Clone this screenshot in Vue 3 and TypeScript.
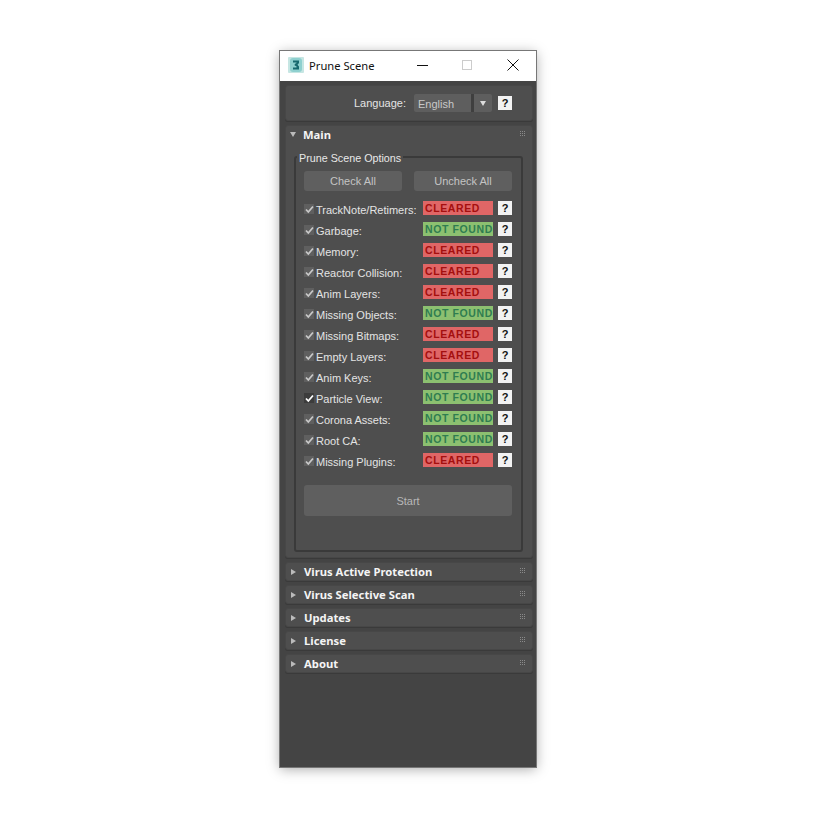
<script setup lang="ts">
interface Row { name: string; found: boolean; dark?: boolean }
const rows: Row[] = [
  { name: 'TrackNote/Retimers:', found: false },
  { name: 'Garbage:', found: true },
  { name: 'Memory:', found: false },
  { name: 'Reactor Collision:', found: false },
  { name: 'Anim Layers:', found: false },
  { name: 'Missing Objects:', found: true },
  { name: 'Missing Bitmaps:', found: false },
  { name: 'Empty Layers:', found: false },
  { name: 'Anim Keys:', found: true },
  { name: 'Particle View:', found: true, dark: true },
  { name: 'Corona Assets:', found: true },
  { name: 'Root CA:', found: true },
  { name: 'Missing Plugins:', found: false },
]
const closed = ['Virus Active Protection', 'Virus Selective Scan', 'Updates', 'License', 'About']
</script>

<template>
  <div class="page">
    <div class="window">
      <header class="titlebar">
        <svg class="appicon" width="16" height="16" viewBox="0 0 16 16">
          <rect width="16" height="16" rx="1" fill="#c6e6e3" />
          <rect x="2" y="1" width="12" height="14" rx="3" fill="#8fd0cf" />
          <path d="M5 3.500h6v2.500l-1.500 1.800 1.500 1.700v3h-6v-2h3.500v-1.200l-1.800-.8v-1.500l1.800-.9v-.6h-3.500z" fill="#17696f" />
        </svg>
        <span class="title">Prune Scene</span>
        <div class="controls">
          <svg width="12" height="12" viewBox="0 0 12 12"><path d="M1 6.500h11" stroke="#111" /></svg>
          <svg width="12" height="12" viewBox="0 0 12 12"><rect x="1.500" y="1.500" width="9" height="9" fill="none" stroke="#ccc" /></svg>
          <svg class="close" width="12" height="12" viewBox="0 0 12 12"><path d="M.5 .5l11 11M11.500 .5l-11 11" stroke="#111" /></svg>
        </div>
      </header>
      <div class="body">
        <section class="panel lang">
          <span class="lbl">Language:</span>
          <div class="select">
            <span class="sel-text">English</span>
            <span class="sel-sep"></span>
            <span class="sel-arrow"></span>
          </div>
          <span class="help">?</span>
        </section>

        <section class="panel main">
          <div class="roll-head">
            <span class="tri down"></span>
            <span class="roll-title">Main</span>
            <span class="grip"><i v-for="n in 9" :key="n"></i></span>
          </div>
          <fieldset class="group">
            <legend>Prune Scene Options</legend>
            <div class="btns">
              <button class="btn">Check All</button>
              <button class="btn">Uncheck All</button>
            </div>
            <div class="rows">
              <div v-for="r in rows" :key="r.name" class="row">
                <span class="check" :class="{ dark: r.dark }">
                  <svg width="9" height="9" viewBox="0 0 9 9"><path d="M1 4.500l2.300 2.500L8 1.500" fill="none" stroke="currentColor" stroke-width="1.800" /></svg>
                </span>
                <span class="name">{{ r.name }}</span>
                <span class="status" :class="r.found ? 'ok' : 'bad'">{{ r.found ? 'NOT FOUND' : 'CLEARED' }}</span>
                <span class="help">?</span>
              </div>
            </div>
            <button class="start">Start</button>
          </fieldset>
        </section>

        <section v-for="c in closed" :key="c" class="panel closed">
          <div class="roll-head">
            <span class="tri right"></span>
            <span class="roll-title">{{ c }}</span>
            <span class="grip"><i v-for="n in 9" :key="n"></i></span>
          </div>
        </section>
      </div>
    </div>
  </div>
</template>

<style>
html, body { margin: 0; background: #fff; }
</style>

<style scoped>
.page {
  width: 817px;
  height: 817px;
  padding: 51px 0 0 280px;
  box-sizing: border-box;
  background: #fff;
}
.window {
  width: 256px;
  height: 716px;
  display: flex;
  flex-direction: column;
  background: #444;
  box-shadow: 0 0 0 1px #777, 0 2px 12px rgba(0, 0, 0, 0.35);
  font-family: "Liberation Sans", sans-serif;
}
.titlebar {
  height: 30px;
  flex: none;
  background: #fff;
  display: flex;
  align-items: center;
  padding: 0 17px 0 8px;
  color: #111;
}
.appicon { flex: none; margin-bottom: 2px; }
.title {
  margin-left: 5px;
  margin-bottom: 2px;
  font-family: "Noto Sans", sans-serif;
  font-size: 11.200px;
  white-space: nowrap;
}
.controls {
  margin-left: auto;
  margin-bottom: 2px;
  display: flex;
  gap: 33px;
}
.controls svg { display: block; overflow: visible; }
.controls .close { margin-left: 1px; }
.body {
  flex: 1;
  padding: 4px 3px 0 5px;
  display: flex;
  flex-direction: column;
  gap: 4px;
}
.panel {
  background: #4e4e4e;
  border: 1px solid #474747;
  border-radius: 3px;
  box-sizing: border-box;
  box-shadow: 0 1px 0 #3a3a3a;
}
.lang {
  height: 36px;
  display: flex;
  align-items: center;
  padding-left: 68px;
  color: #e4e4e4;
  font-size: 11px;
}
.lbl { width: 60px; flex: none; white-space: nowrap; }
.select {
  width: 78px;
  height: 18px;
  flex: none;
  display: flex;
  align-items: center;
  background: #5e5e5e;
  color: #c8c8c8;
  border-radius: 2px;
  margin-right: 6px;
}
.sel-text { width: 57px; padding: 2px 0 0 4px; flex: none; box-sizing: border-box; }
.sel-sep { width: 3px; height: 18px; background: #3f3f3f; flex: none; }
.sel-arrow {
  margin-left: 6px;
  width: 0;
  height: 0;
  border-left: 3.500px solid transparent;
  border-right: 3.500px solid transparent;
  border-top: 5px solid #ddd;
}
.help {
  width: 14px;
  height: 14px;
  flex: none;
  background: #f2f2f2;
  color: #111;
  font-size: 11px;
  font-weight: 700;
  line-height: 14px;
  text-align: center;
}
.main { height: 433px; }
.roll-head {
  height: 17px;
  display: flex;
  align-items: center;
  padding-left: 4px;
  position: relative;
}
.main .roll-head { height: 16px; }
.tri { width: 0; height: 0; flex: none; }
.tri.down {
  border-left: 3.500px solid transparent;
  border-right: 3.500px solid transparent;
  border-top: 5px solid #bbb;
}
.tri.right {
  border-top: 3.500px solid transparent;
  border-bottom: 3.500px solid transparent;
  border-left: 5px solid #bbb;
  margin-left: 1px;
  margin-right: 1px;
}
.roll-title {
  margin-left: 7px;
  color: #f4f4f4;
  font-family: "Noto Sans", sans-serif;
  font-weight: 700;
  font-size: 11.250px;
  white-space: nowrap;
}
.grip {
  position: absolute;
  right: 7px;
  top: 5px;
  display: grid;
  grid-template-columns: repeat(3, 1px);
  gap: 1px;
}
.grip i { width: 1px; height: 1px; background: #8a8a8a; display: block; }
.group {
  margin: 7px 9px 0 8px;
  padding: 0;
  height: 403px;
  box-sizing: border-box;
  border: 2px solid #3a3a3a;
  border-radius: 3px;
  min-width: 0;
  position: relative;
}
.group legend {
  padding: 2px 2px 0;
  margin-left: 1px;
  color: #e8e8e8;
  font-size: 10.750px;
  line-height: 14px;
}
.btns {
  display: flex;
  gap: 12px;
  padding: 6px 0 0 8px;
}
.btn {
  width: 98px;
  height: 20px;
  padding: 0;
  border: 0;
  border-radius: 3px;
  background: #5f5f5f;
  color: #c4c4c4;
  font-family: inherit;
  font-size: 11px;
}
.rows {
  padding: 10px 0 0 8px;
  display: flex;
  flex-direction: column;
  gap: 7px;
}
.row {
  height: 14px;
  display: flex;
  align-items: center;
}
.check {
  width: 10px;
  height: 10px;
  flex: none;
  margin-top: 2px;
  background: #5f5f5f;
  color: #c8c8c8;
  display: flex;
  align-items: center;
  justify-content: center;
}
.check.dark { background: #3c3c3c; color: #fff; }
.check svg { display: block; }
.name {
  width: 107px;
  flex: none;
  margin-left: 2px;
  color: #e4e4e4;
  font-size: 11px;
  white-space: nowrap;
  position: relative;
  top: 2px;
}
.status {
  width: 70px;
  height: 14px;
  flex: none;
  box-sizing: border-box;
  padding-left: 2px;
  margin-right: 5px;
  font-weight: 700;
  font-size: 10.500px;
  line-height: 14px;
  letter-spacing: 0.600px;
  white-space: nowrap;
  overflow: hidden;
}
.status.bad { background: #e06666; color: #a50f0f; }
.status.ok { background: #8cc070; color: #2f7d50; }
.start {
  display: block;
  margin: 18px 0 0 8px;
  width: 208px;
  height: 31px;
  padding: 0;
  border: 0;
  border-radius: 3px;
  background: #5f5f5f;
  color: #b8b8b8;
  font-family: inherit;
  font-size: 11px;
}
</style>
